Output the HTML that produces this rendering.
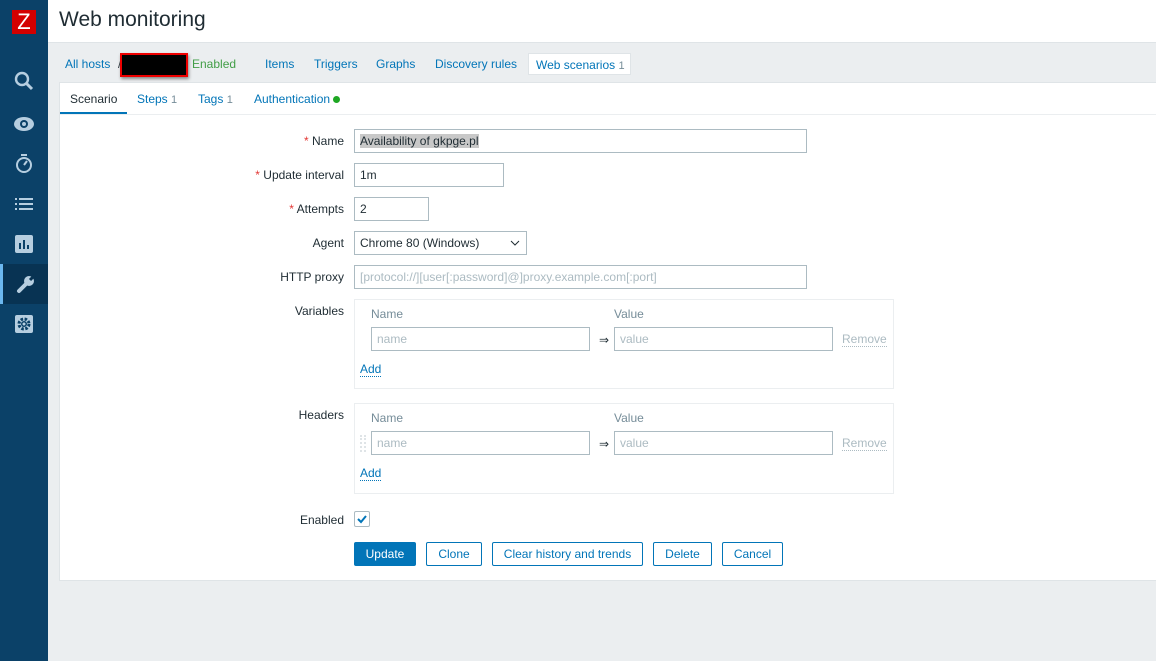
<!DOCTYPE html><html><head><style>
*{box-sizing:border-box;margin:0;padding:0}
body{width:1156px;height:661px;overflow:hidden;background:#ebeef0;font-family:"Liberation Sans",Arial,sans-serif;font-size:12px;color:#1f2c33;position:relative}
.sb{position:absolute;left:0;top:0;width:48px;height:661px;background:#0b4168}
.logo{position:absolute;left:12px;top:10px;width:24px;height:24px;background:#d40000;color:#fff;font-size:22px;text-align:center;line-height:24px}
.ic{position:absolute;left:0;width:48px;height:40px;display:flex;align-items:center;justify-content:center}
.hd{position:absolute;left:48px;top:0;right:0;height:43px;background:#fff;border-bottom:1px solid #dfe4e7}
.hd h1{position:absolute;left:11px;top:8px;font-size:21px;font-weight:normal;color:#1f2c33}
a,.lk{color:#0275b8;text-decoration:none}
.ab{position:absolute;top:57px;white-space:nowrap}
.main{position:absolute;left:59px;top:82px;width:1100px;height:499px;background:#fff;border:1px solid #dfe4e7}
.tab{position:absolute;top:9px;color:#0275b8}
.tab .n{color:#768d99;font-size:11px}
.lbl{position:absolute;right:812px;width:200px;text-align:right}
.req{color:#e33734}
.inp{position:absolute;height:24px;border:1px solid #acbbc2;background:#fff;padding:0 5px;line-height:22px;white-space:nowrap}
.ph{color:#acbbc2}
.box{position:absolute;left:354px;width:540px;border:1px solid #ebeef0}
.btn{position:absolute;top:542px;height:24px;border:1px solid #0275b8;color:#0275b8;background:#fff;text-align:center;line-height:22px;border-radius:2px}
.dot{border-bottom:1px dotted #0275b8}
.gh{color:#768d99}
</style></head><body>
<div class="sb">
<div class="logo">Z</div>
<div class="ic" style="top:61px"><svg width="20" height="20"><circle cx="8" cy="8" r="6" fill="none" stroke="#b6cee0" stroke-width="2.4"/><path d="M12 12l6 6" stroke="#b6cee0" stroke-width="3"/></svg></div>
<div class="ic" style="top:104px"><svg width="22" height="16"><ellipse cx="11" cy="8" rx="10" ry="7" fill="#b6cee0"/><circle cx="11" cy="8" r="4" fill="#0b4168"/><circle cx="11" cy="8" r="2" fill="#b6cee0"/></svg></div>
<div class="ic" style="top:144px"><svg width="18" height="20"><rect x="6" y="0" width="6" height="2" fill="#b6cee0"/><circle cx="9" cy="11" r="7" fill="none" stroke="#b6cee0" stroke-width="2"/><path d="M9 11l3-4" stroke="#b6cee0" stroke-width="2"/></svg></div>
<div class="ic" style="top:184px"><svg width="18" height="14"><g fill="#b6cee0"><rect x="0" y="1" width="2" height="2"/><rect x="4" y="1" width="14" height="2"/><rect x="0" y="6" width="2" height="2"/><rect x="4" y="6" width="14" height="2"/><rect x="0" y="11" width="2" height="2"/><rect x="4" y="11" width="14" height="2"/></g></svg></div>
<div class="ic" style="top:224px"><svg width="18" height="18"><rect width="18" height="18" rx="2" fill="#b6cee0"/><g fill="#0b4168"><rect x="4" y="8" width="2" height="6"/><rect x="8" y="5" width="2" height="9"/><rect x="12" y="10" width="2" height="4"/></g></svg></div>
<div class="ic" style="top:264px;background:#083353;border-left:3px solid #6bb7ef"><svg width="20" height="20"><path d="M3 17l8-8" stroke="#b6cee0" stroke-width="4" stroke-linecap="round"/><circle cx="13" cy="7" r="5" fill="#b6cee0"/><path d="M14 6l6-6" stroke="#083353" stroke-width="3"/></svg></div>
<div class="ic" style="top:304px"><svg width="18" height="18"><rect width="18" height="18" rx="2" fill="#b6cee0"/><circle cx="9" cy="9" r="5" fill="none" stroke="#0b4168" stroke-width="3" stroke-dasharray="2.5 1.5"/><circle cx="9" cy="9" r="3" fill="#0b4168"/><circle cx="9" cy="9" r="1.5" fill="#b6cee0"/></svg></div>
</div>
<div class="hd"><h1>Web monitoring</h1></div>
<a class="ab" style="left:65px">All hosts</a><span class="ab" style="left:118px">/</span>
<div style="position:absolute;left:120px;top:53px;width:68px;height:24px;background:#000;border:2px solid #e00;box-shadow:1px 2px 3px #888"></div>
<span class="ab" style="left:192px;color:#429e47">Enabled</span>
<a class="ab" style="left:265px">Items</a><a class="ab" style="left:314px">Triggers</a><a class="ab" style="left:376px">Graphs</a><a class="ab" style="left:435px">Discovery rules</a>
<div style="position:absolute;left:528px;top:53px;width:103px;height:22px;background:#fff;border:1px solid #dfe4e7;padding:4px 0 0 7px;color:#0275b8">Web scenarios <span style="color:#768d99;font-size:11px">1</span></div>
<div class="main">
<span class="tab" style="left:10px;color:#1f2c33">Scenario</span>
<div style="position:absolute;left:0;top:29px;width:67px;height:3px;background:#0275b8"></div>
<span class="tab" style="left:77px">Steps <span class="n">1</span></span>
<span class="tab" style="left:138px">Tags <span class="n">1</span></span>
<span class="tab" style="left:194px">Authentication <span style="display:inline-block;width:7px;height:7px;border-radius:50%;background:#1ea723"></span></span>
<div style="position:absolute;left:0;right:0;top:31px;border-bottom:1px solid #ebeef0"></div>
</div>
<div class="lbl" style="top:134px"><span class="req">* </span>Name</div>
<div class="inp" style="left:354px;top:129px;width:453px"><span style="background:#c8c8c8">Availability of gkpge.pl</span></div>
<div class="lbl" style="top:168px"><span class="req">* </span>Update interval</div>
<div class="inp" style="left:354px;top:163px;width:150px">1m</div>
<div class="lbl" style="top:202px"><span class="req">* </span>Attempts</div>
<div class="inp" style="left:354px;top:197px;width:75px">2</div>
<div class="lbl" style="top:236px">Agent</div>
<div class="inp" style="left:354px;top:231px;width:173px">Chrome 80 (Windows)<svg style="position:absolute;right:6px;top:8px" width="10" height="6"><path d="M1 1l4 4 4-4" fill="none" stroke="#1f2c33"/></svg></div>
<div class="lbl" style="top:270px">HTTP proxy</div>
<div class="inp ph" style="left:354px;top:265px;width:453px">[protocol://][user[:password]@]proxy.example.com[:port]</div>
<div class="lbl" style="top:304px">Variables</div>
<div class="box" style="top:299px;height:90px">
<span class="gh" style="position:absolute;left:16px;top:7px">Name</span><span class="gh" style="position:absolute;left:259px;top:7px">Value</span>
<div class="inp ph" style="left:16px;top:27px;width:219px">name</div><span style="position:absolute;left:244px;top:33px">⇒</span>
<div class="inp ph" style="left:259px;top:27px;width:219px">value</div>
<span style="position:absolute;left:487px;top:32px;color:#acbbc2;border-bottom:1px dotted #acbbc2">Remove</span>
<span class="lk dot" style="position:absolute;left:5px;top:62px">Add</span></div>
<div class="lbl" style="top:408px">Headers</div>
<div class="box" style="top:403px;height:91px">
<span class="gh" style="position:absolute;left:16px;top:7px">Name</span><span class="gh" style="position:absolute;left:259px;top:7px">Value</span>
<div style="position:absolute;left:5px;top:31px;width:6px;height:17px;border-left:2px dotted #dfe4e7;border-right:2px dotted #dfe4e7"></div>
<div class="inp ph" style="left:16px;top:27px;width:219px">name</div><span style="position:absolute;left:244px;top:33px">⇒</span>
<div class="inp ph" style="left:259px;top:27px;width:219px">value</div>
<span style="position:absolute;left:487px;top:32px;color:#acbbc2;border-bottom:1px dotted #acbbc2">Remove</span>
<span class="lk dot" style="position:absolute;left:5px;top:62px">Add</span></div>
<div class="lbl" style="top:513px">Enabled</div>
<div style="position:absolute;left:354px;top:511px;width:16px;height:16px;border:1px solid #acbbc2;border-radius:2px"><svg width="14" height="14"><path d="M3 7l3 3 5-6" fill="none" stroke="#0275b8" stroke-width="2"/></svg></div>
<div class="btn" style="left:354px;width:62px;background:#0275b8;color:#fff">Update</div>
<div class="btn" style="left:426px;width:56px">Clone</div>
<div class="btn" style="left:492px;width:151px">Clear history and trends</div>
<div class="btn" style="left:653px;width:59px">Delete</div>
<div class="btn" style="left:722px;width:61px">Cancel</div>
</body></html>
